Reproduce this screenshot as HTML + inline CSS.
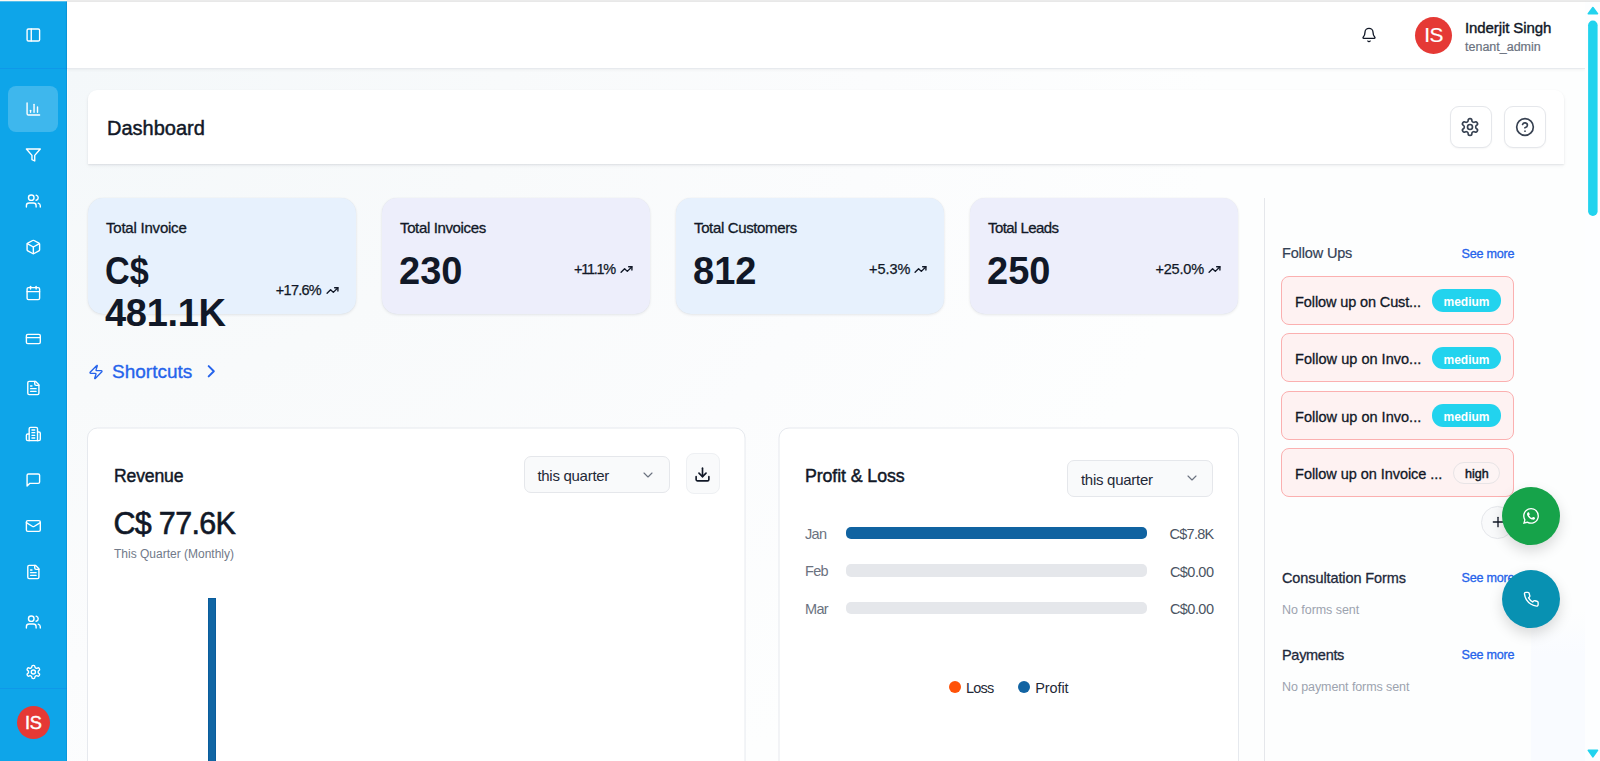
<!DOCTYPE html>
<html lang="en">
<head>
<meta charset="utf-8">
<title>Dashboard</title>
<style>
*{box-sizing:border-box;margin:0;padding:0}
html,body{width:1600px;height:761px;overflow:hidden}
body{position:relative;font-family:"Liberation Sans",sans-serif;color:#111827;background:#fafbfd}
.abs{position:absolute}
svg.ic{position:absolute;fill:none;stroke:currentColor;stroke-width:2;stroke-linecap:round;stroke-linejoin:round}
.t{position:absolute;white-space:nowrap;line-height:1}
/* page */
#topline{left:0;top:0;width:1600px;height:2px;z-index:50;background:linear-gradient(180deg,#fdf9f2 0,#fdf9f2 1px,rgba(253,249,242,.3) 1px,rgba(253,249,242,.3) 2px) 0 0/67px 2px no-repeat,linear-gradient(180deg,#ebebeb 0,#ebebeb 1px,rgba(226,226,226,.8) 1px,rgba(226,226,226,.8) 2px) 67px 0/1533px 2px no-repeat}
#main{left:67px;top:0;width:1518px;height:761px;border-left:1px solid #fdfeff;background:radial-gradient(1150px 850px at 0 69px,#f4f8fa 0%,#f8fafb 38%,#fbfcfd 70%,#fdfefe 100%)}
#side{left:0;top:0;width:67px;height:761px;background:#0ea5e9;color:#fff;border-right:1px solid rgba(2,132,199,.4)}
#side .sep1{left:0;top:67.5px;width:67px;height:1.2px;background:rgba(20,110,230,.22)}
#side .sep2{left:0;top:688.3px;width:67px;height:1.2px;background:rgba(20,110,230,.22)}
#side .act{left:8.4px;top:86px;width:49.2px;height:46px;border-radius:8px;background:rgba(255,255,255,.2)}
#side svg.ic{left:25px;width:16.7px;height:16px}
#top{left:67px;top:1px;width:1518px;height:68px;background:#fff;border-bottom:1px solid #e7eaee;box-shadow:0 1px 3px rgba(0,0,0,.05)}
.av{position:absolute;border-radius:50%;background:#e53935;color:#fff;text-align:center}
/* scrollbar */
#sb{left:1585px;top:0;width:15px;height:761px;background:#fdfeff}
#sb .th{left:3.1px;top:20.5px;width:9.5px;height:195.5px;border-radius:4.75px;background:#22d3ee}
#sb svg{position:absolute;left:0;width:15px;fill:#22d3ee;stroke:#22d3ee;stroke-width:1.6;stroke-linejoin:round}
/* header card */
#hc{left:88px;top:90px;width:1476px;height:74px;background:#fff;border-radius:9px 9px 0 0;box-shadow:0 1px 2px rgba(15,23,42,.09),0 2px 5px rgba(15,23,42,.04)}
.ibtn{position:absolute;width:42px;height:42px;border:1px solid #e5e7eb;border-radius:9px;background:#fff;color:#374151;box-shadow:0 1px 2px rgba(0,0,0,.04)}
/* stat cards */
.sc{position:absolute;top:198px;width:268.4px;height:116px;border-radius:15px;box-shadow:0 1px 3px rgba(15,23,42,.09),0 0 1px rgba(15,23,42,.08)}
.sc.b{background:#e7f1fd}
.sc.v{background:#edeefb}
.sc .lb{left:18px;top:22px;font-size:15px;color:#111827;-webkit-text-stroke:.3px #111827}
.sc .num{left:17px;top:51.5px;font-size:38px;font-weight:700;color:#111827;line-height:42.5px;white-space:normal;width:160px}
.sc .pc{right:31.7px;top:63.5px;font-size:14.5px;color:#111827;-webkit-text-stroke:.25px #111827}
.sc svg.ic{right:17.2px;top:65.2px;width:13px;height:13px;stroke-width:2.5;color:#111827}
/* panels */
.pn{position:absolute;top:427.5px;height:360px;background:#fff;border:1px solid #e8ebef;border-radius:12px;box-shadow:0 1px 2px rgba(15,23,42,.04)}
.sel{position:absolute;width:146px;height:37.2px;border:1px solid #e5e7eb;border-radius:7px;background:#f9fafb}
.sel .t{left:12.7px;top:11.2px;font-size:15px;letter-spacing:-.28px;color:#1f2937}
.sel svg.ic{left:115.4px;top:9.4px;width:16px;height:16px;color:#6b7280;stroke-width:1.7}
.row .m{font-size:14.5px;letter-spacing:-.7px;color:#6b7280}
.row .v{font-size:14.5px;letter-spacing:-.55px;color:#4b5563}
.bar{position:absolute;left:846px;width:300.5px;height:12.7px;border-radius:5px;background:#e5e7eb}
/* right */
.fu{position:absolute;left:1281.3px;width:232.7px;height:48.8px;border:1px solid #fbb0b0;border-radius:8px;background:#fef2f2}
.fu .t{left:12.8px;top:17.6px;font-size:14.5px;color:#111827;-webkit-text-stroke:.3px #111827}
.bd{position:absolute;left:149.7px;top:12.2px;width:69px;height:22.4px;border-radius:11.2px;background:#22d3ee;color:#fff;font-size:12px;font-weight:700;text-align:center;line-height:27.4px}
.bd.hi{left:170.8px;top:12.5px;width:47.4px;height:22.2px;background:#fdf4f4;border:1px solid #e8e4e6;color:#111827;font-weight:400;font-size:12.5px;-webkit-text-stroke:.45px #111827;line-height:22.6px}
.sm{font-size:12.6px;letter-spacing:-.25px;color:#2563eb;-webkit-text-stroke:.3px #2563eb}
.h3{font-size:14.5px;color:#1e293b;-webkit-text-stroke:.3px #1e293b}
.mu{font-size:12.5px;color:#9ca3af}
.fab{position:absolute;left:1502px;width:58px;height:58px;border-radius:50%;color:#fff;box-shadow:0 6px 14px rgba(0,0,0,.15)}
</style>
</head>
<body>
<div class="abs" id="main"></div>

<!-- SIDEBAR -->
<div class="abs" id="side">
  <div class="abs sep1"></div>
  <div class="abs act"></div>
  <svg class="ic" style="top:27px" viewBox="0 0 24 24" preserveAspectRatio="none"><rect width="18" height="18" x="3" y="3" rx="2"/><path d="M9 3v18"/></svg>
  <svg class="ic" style="top:101px" viewBox="0 0 24 24" preserveAspectRatio="none"><path d="M3 3v16a2 2 0 0 0 2 2h16"/><path d="M18 17V9"/><path d="M13 17V5"/><path d="M8 17v-3"/></svg>
  <svg class="ic" style="top:147px" viewBox="0 0 24 24" preserveAspectRatio="none"><polygon points="22 3 2 3 10 12.46 10 19 14 21 14 12.46 22 3"/></svg>
  <svg class="ic" style="top:193px" viewBox="0 0 24 24" preserveAspectRatio="none"><path d="M16 21v-2a4 4 0 0 0-4-4H6a4 4 0 0 0-4 4v2"/><circle cx="9" cy="7" r="4"/><path d="M22 21v-2a4 4 0 0 0-3-3.87"/><path d="M16 3.13a4 4 0 0 1 0 7.75"/></svg>
  <svg class="ic" style="top:239px" viewBox="0 0 24 24" preserveAspectRatio="none"><path d="M21 8a2 2 0 0 0-1-1.73l-7-4a2 2 0 0 0-2 0l-7 4A2 2 0 0 0 3 8v8a2 2 0 0 0 1 1.73l7 4a2 2 0 0 0 2 0l7-4A2 2 0 0 0 21 16Z"/><path d="m3.3 7 8.7 5 8.7-5"/><path d="M12 22V12"/></svg>
  <svg class="ic" style="top:285px" viewBox="0 0 24 24" preserveAspectRatio="none"><path d="M8 2v4"/><path d="M16 2v4"/><rect width="18" height="18" x="3" y="4" rx="2"/><path d="M3 10h18"/></svg>
  <svg class="ic" style="top:331px" viewBox="0 0 24 24" preserveAspectRatio="none"><rect width="20" height="14" x="2" y="5" rx="2"/><path d="M2 10h20"/></svg>
  <svg class="ic" style="top:380px" viewBox="0 0 24 24" preserveAspectRatio="none"><path d="M15 2H6a2 2 0 0 0-2 2v16a2 2 0 0 0 2 2h12a2 2 0 0 0 2-2V7Z"/><path d="M14 2v4a2 2 0 0 0 2 2h4"/><path d="M10 9H8"/><path d="M16 13H8"/><path d="M16 17H8"/></svg>
  <svg class="ic" style="top:426px" viewBox="0 0 24 24" preserveAspectRatio="none"><path d="M6 22V4a2 2 0 0 1 2-2h8a2 2 0 0 1 2 2v18Z"/><path d="M6 12H4a2 2 0 0 0-2 2v6a2 2 0 0 0 2 2h2"/><path d="M18 9h2a2 2 0 0 1 2 2v9a2 2 0 0 1-2 2h-2"/><path d="M10 6h4"/><path d="M10 10h4"/><path d="M10 14h4"/><path d="M10 18h4"/></svg>
  <svg class="ic" style="top:472px" viewBox="0 0 24 24" preserveAspectRatio="none"><path d="M21 15a2 2 0 0 1-2 2H7l-4 4V5a2 2 0 0 1 2-2h14a2 2 0 0 1 2 2z"/></svg>
  <svg class="ic" style="top:518px" viewBox="0 0 24 24" preserveAspectRatio="none"><rect width="20" height="16" x="2" y="4" rx="2"/><path d="m22 7-8.97 5.7a1.94 1.94 0 0 1-2.06 0L2 7"/></svg>
  <svg class="ic" style="top:564px" viewBox="0 0 24 24" preserveAspectRatio="none"><path d="M15 2H6a2 2 0 0 0-2 2v16a2 2 0 0 0 2 2h12a2 2 0 0 0 2-2V7Z"/><path d="M14 2v4a2 2 0 0 0 2 2h4"/><path d="M10 9H8"/><path d="M16 13H8"/><path d="M16 17H8"/></svg>
  <svg class="ic" style="top:614px" viewBox="0 0 24 24" preserveAspectRatio="none"><path d="M16 21v-2a4 4 0 0 0-4-4H6a4 4 0 0 0-4 4v2"/><circle cx="9" cy="7" r="4"/><path d="M22 21v-2a4 4 0 0 0-3-3.87"/><path d="M16 3.13a4 4 0 0 1 0 7.75"/></svg>
  <svg class="ic" style="top:664px" viewBox="0 0 24 24" preserveAspectRatio="none"><path d="M12.22 2h-.44a2 2 0 0 0-2 2v.18a2 2 0 0 1-1 1.73l-.43.25a2 2 0 0 1-2 0l-.15-.08a2 2 0 0 0-2.73.73l-.22.38a2 2 0 0 0 .73 2.73l.15.1a2 2 0 0 1 1 1.72v.51a2 2 0 0 1-1 1.74l-.15.09a2 2 0 0 0-.73 2.73l.22.38a2 2 0 0 0 2.73.73l.15-.08a2 2 0 0 1 2 0l.43.25a2 2 0 0 1 1 1.73V20a2 2 0 0 0 2 2h.44a2 2 0 0 0 2-2v-.18a2 2 0 0 1 1-1.73l.43-.25a2 2 0 0 1 2 0l.15.08a2 2 0 0 0 2.73-.73l.22-.39a2 2 0 0 0-.73-2.73l-.15-.08a2 2 0 0 1-1-1.74v-.5a2 2 0 0 1 1-1.74l.15-.09a2 2 0 0 0 .73-2.73l-.22-.38a2 2 0 0 0-2.73-.73l-.15.08a2 2 0 0 1-2 0l-.43-.25a2 2 0 0 1-1-1.73V4a2 2 0 0 0-2-2z"/><circle cx="12" cy="12" r="3"/></svg>
  <div class="abs sep2"></div>
  <div class="av" style="left:16.8px;top:706px;width:33.2px;height:33.2px;font-size:18.2px;line-height:34.8px;letter-spacing:-.4px;text-indent:-.2px;-webkit-text-stroke:.45px #fff">IS</div>
</div>

<!-- TOPBAR -->
<div class="abs" id="top">
  <svg class="ic" style="left:1294px;top:26px;width:16px;height:16px;color:#111827" viewBox="0 0 24 24"><path d="M10.268 21a2 2 0 0 0 3.464 0"/><path d="M3.262 15.326A1 1 0 0 0 4 17h16a1 1 0 0 0 .74-1.673C19.41 13.956 18 12.499 18 8A6 6 0 0 0 6 8c0 4.499-1.411 5.956-2.738 7.326"/></svg>
  <div class="av" style="left:1347.9px;top:15.6px;width:37.5px;height:37.5px;font-size:20.8px;line-height:36.3px;letter-spacing:-.5px;-webkit-text-stroke:.2px #fff">IS</div>
  <div class="t" style="left:1398px;top:19px;font-size:15px;color:#111827;letter-spacing:-.1px;-webkit-text-stroke:.4px #111827">Inderjit Singh</div>
  <div class="t" style="left:1398px;top:39.8px;font-size:12.5px;color:#6b7280;-webkit-text-stroke:.2px #6b7280">tenant_admin</div>
</div>

<div class="abs" id="topline"></div>

<!-- SCROLLBAR -->
<div class="abs" id="sb"><svg style="top:0;height:20px" viewBox="0 0 15 20"><path d="M3.3 13.7 L7.9 7.6 L12.5 13.7 Z"/></svg><svg style="top:0;height:230px;stroke:none" viewBox="0 0 15 230"><rect x="3.1" y="20.5" width="9.5" height="195.5" rx="4.75"/></svg><svg style="top:741px;height:20px" viewBox="0 0 15 20"><path d="M3.3 9.3 L12.5 9.3 L7.9 15.8 Z"/></svg></div>
<div class="abs" style="left:1531px;top:610px;width:54px;height:151px;background:linear-gradient(180deg,rgba(249,251,255,0) 0,#f9fbff 30%,#f9fbff 100%)"></div>

<!-- HEADER CARD -->
<div class="abs" id="hc">
  <div class="t" style="left:19px;top:28px;font-size:20px;color:#111827;-webkit-text-stroke:.45px #111827">Dashboard</div>
  <div class="ibtn" style="left:1362px;top:16px"><svg class="ic" style="left:9px;top:10px;width:20px;height:20px" viewBox="0 0 24 24"><path d="M12.22 2h-.44a2 2 0 0 0-2 2v.18a2 2 0 0 1-1 1.73l-.43.25a2 2 0 0 1-2 0l-.15-.08a2 2 0 0 0-2.73.73l-.22.38a2 2 0 0 0 .73 2.73l.15.1a2 2 0 0 1 1 1.72v.51a2 2 0 0 1-1 1.74l-.15.09a2 2 0 0 0-.73 2.73l.22.38a2 2 0 0 0 2.73.73l.15-.08a2 2 0 0 1 2 0l.43.25a2 2 0 0 1 1 1.73V20a2 2 0 0 0 2 2h.44a2 2 0 0 0 2-2v-.18a2 2 0 0 1 1-1.73l.43-.25a2 2 0 0 1 2 0l.15.08a2 2 0 0 0 2.73-.73l.22-.39a2 2 0 0 0-.73-2.73l-.15-.08a2 2 0 0 1-1-1.74v-.5a2 2 0 0 1 1-1.74l.15-.09a2 2 0 0 0 .73-2.73l-.22-.38a2 2 0 0 0-2.73-.73l-.15.08a2 2 0 0 1-2 0l-.43-.25a2 2 0 0 1-1-1.73V4a2 2 0 0 0-2-2z"/><circle cx="12" cy="12" r="3"/></svg></div>
  <div class="ibtn" style="left:1416px;top:16px"><svg class="ic" style="left:10px;top:10px;width:20px;height:20px" viewBox="0 0 24 24"><circle cx="12" cy="12" r="10"/><path d="M9.09 9a3 3 0 0 1 5.83 1c0 2-3 3-3 3"/><path d="M12 17h.01"/></svg></div>
</div>

<!-- STAT CARDS -->
<div class="sc b" style="left:88px">
  <div class="t lb" style="letter-spacing:-.22px">Total Invoice</div>
  <div class="t num"><span style="display:inline-block;transform:scaleX(.9);transform-origin:0 50%">C$</span> <span style="letter-spacing:-.3px">481.1K</span></div>
  <div class="t pc" style="top:84.5px;letter-spacing:-.74px;right:35.4px">+17.6%</div>
  <svg class="ic" style="top:86.2px" viewBox="0 0 24 24"><polyline points="22 7 13.5 15.5 8.5 10.5 2 17"/><polyline points="16 7 22 7 22 13"/></svg>
</div>
<div class="sc v" style="left:382px">
  <div class="t lb" style="letter-spacing:-.36px">Total Invoices</div>
  <div class="t num">230</div>
  <div class="t pc" style="letter-spacing:-1.24px;right:35.4px">+11.1%</div>
  <svg class="ic" viewBox="0 0 24 24"><polyline points="22 7 13.5 15.5 8.5 10.5 2 17"/><polyline points="16 7 22 7 22 13"/></svg>
</div>
<div class="sc b" style="left:676px">
  <div class="t lb" style="letter-spacing:-.36px">Total Customers</div>
  <div class="t num">812</div>
  <div class="t pc" style="right:33.9px">+5.3%</div>
  <svg class="ic" viewBox="0 0 24 24"><polyline points="22 7 13.5 15.5 8.5 10.5 2 17"/><polyline points="16 7 22 7 22 13"/></svg>
</div>
<div class="sc v" style="left:970px">
  <div class="t lb" style="letter-spacing:-.56px">Total Leads</div>
  <div class="t num">250</div>
  <div class="t pc" style="letter-spacing:-.16px;right:34.4px">+25.0%</div>
  <svg class="ic" viewBox="0 0 24 24"><polyline points="22 7 13.5 15.5 8.5 10.5 2 17"/><polyline points="16 7 22 7 22 13"/></svg>
</div>

<!-- SHORTCUTS -->
<svg class="ic" style="left:88px;top:363.5px;width:16px;height:16px;color:#2563eb" viewBox="0 0 24 24"><path d="M4 14a1 1 0 0 1-.78-1.63l9.9-10.2a.5.5 0 0 1 .86.46l-1.92 6.02A1 1 0 0 0 13 10h7a1 1 0 0 1 .78 1.63l-9.9 10.2a.5.5 0 0 1-.86-.46l1.92-6.02A1 1 0 0 0 11 14z"/></svg>
<div class="t" style="left:112px;top:362.1px;font-size:19px;color:#2563eb;-webkit-text-stroke:.35px #2563eb">Shortcuts</div>
<svg class="ic" style="left:201.3px;top:361.2px;width:20.5px;height:20.5px;stroke-width:2.3;color:#2563eb" viewBox="0 0 24 24"><path d="m9 18 6-6-6-6"/></svg>

<!-- REVENUE -->
<svg class="abs" style="left:0;top:0;width:1600px;height:761px" viewBox="0 0 1600 761"><rect x="87.5" y="428" width="657.54" height="400" rx="10" fill="#fff" stroke="#e6e9ee" stroke-width="1"/><rect x="779" y="428" width="459.54" height="400" rx="10" fill="#fff" stroke="#e6e9ee" stroke-width="1"/></svg>
<div class="abs" style="left:89px;top:429px;width:0;height:0">
  <div class="t" style="left:25px;top:38.5px;font-size:17.6px;letter-spacing:-.15px;color:#111827;-webkit-text-stroke:.45px #111827">Revenue</div>
  <div class="t" style="left:24.5px;top:78.8px;font-size:30.5px;letter-spacing:-.7px;color:#111827;-webkit-text-stroke:.6px #111827">C$ 77.6K</div>
  <div class="t" style="left:25px;top:119.4px;font-size:12px;color:#717a89">This Quarter (Monthly)</div>
  <div class="abs" style="left:119px;top:169px;width:7.7px;height:200px;background:#1166a4;box-shadow:inset 0 0 0 1px #0a5c9c"></div>
  <div class="sel" style="left:434.7px;top:27.3px"><div class="t">this quarter</div><svg class="ic" viewBox="0 0 24 24"><path d="m6 9 6 6 6-6"/></svg></div>
  <div class="abs" style="left:597.2px;top:24.2px;width:33.4px;height:41.3px;border:1px solid #eef0f3;border-radius:8px;background:#f9fafb;color:#111827"><svg class="ic" style="left:7px;top:12px;width:17px;height:17px;stroke-width:2.3" viewBox="0 0 24 24"><path d="M21 15v4a2 2 0 0 1-2 2H5a2 2 0 0 1-2-2v-4"/><polyline points="7 10 12 15 17 10"/><line x1="12" x2="12" y1="15" y2="3"/></svg></div>
</div>

<!-- PROFIT & LOSS -->
<div class="t" style="left:805px;top:467.5px;font-size:17.8px;letter-spacing:-.1px;color:#111827;-webkit-text-stroke:.45px #111827">Profit &amp; Loss</div>
<div class="sel" style="left:1067.3px;top:460.1px"><div class="t">this quarter</div><svg class="ic" viewBox="0 0 24 24"><path d="m6 9 6 6 6-6"/></svg></div>
<div class="row">
  <div class="t m" style="left:805px;top:526.9px">Jan</div><div class="bar" style="top:526.5px;background:#1063a1"></div><div class="t v" style="right:386.6px;top:527.1px;letter-spacing:-.75px">C$7.8K</div>
  <div class="t m" style="left:805px;top:564.3px">Feb</div><div class="bar" style="top:564.05px"></div><div class="t v" style="right:386.6px;top:564.5px">C$0.00</div>
  <div class="t m" style="left:805px;top:601.8px">Mar</div><div class="bar" style="top:601.6px"></div><div class="t v" style="right:386.6px;top:601.8px">C$0.00</div>
</div>
<div class="abs" style="left:948.8px;top:681px;width:12.4px;height:12.4px;border-radius:50%;background:#ff5208"></div>
<div class="t" style="left:966px;top:681.2px;font-size:14.5px;letter-spacing:-.8px;color:#1f2937">Loss</div>
<div class="abs" style="left:1018px;top:681px;width:12.4px;height:12.4px;border-radius:50%;background:#1264a3"></div>
<div class="t" style="left:1035.3px;top:681.2px;font-size:14.5px;letter-spacing:-.1px;color:#1f2937">Profit</div>

<!-- RIGHT PANEL -->
<div class="abs" style="left:1264px;top:198px;width:1px;height:563px;background:#e5e7eb"></div>
<div class="t h3" style="left:1282px;top:246.1px;letter-spacing:-.15px;color:#334155;-webkit-text-stroke:.2px #334155">Follow Ups</div>
<div class="t sm" style="right:85.8px;top:247.5px">See more</div>
<div class="fu" style="top:276px"><div class="t" style="letter-spacing:-.12px">Follow up on Cust...</div><div class="bd">medium</div></div>
<div class="fu" style="top:333.4px"><div class="t" style="letter-spacing:.02px">Follow up on Invo...</div><div class="bd">medium</div></div>
<div class="fu" style="top:391px"><div class="t" style="letter-spacing:.02px">Follow up on Invo...</div><div class="bd">medium</div></div>
<div class="fu" style="top:448.4px"><div class="t" style="letter-spacing:-.05px">Follow up on Invoice ...</div><div class="bd hi">high</div></div>
<div class="abs" style="left:1481.3px;top:506px;width:32.8px;height:32.8px;border-radius:50%;border:1px solid #e5e7eb;background:#f9fafb;color:#111827"><svg class="ic" style="left:7.4px;top:7.4px;width:16px;height:16px" viewBox="0 0 24 24"><path d="M5 12h14"/><path d="M12 5v14"/></svg></div>
<div class="t h3" style="left:1282px;top:570.7px;letter-spacing:-.1px">Consultation Forms</div>
<div class="t sm" style="right:85.8px;top:572px">See more</div>
<div class="t mu" style="left:1282px;top:603.9px;letter-spacing:-.05px">No forms sent</div>
<div class="t h3" style="left:1282px;top:647.5px;letter-spacing:-.3px">Payments</div>
<div class="t sm" style="right:85.8px;top:649.2px">See more</div>
<div class="t mu" style="left:1282px;top:681.1px;letter-spacing:-.09px">No payment forms sent</div>

<!-- FABS -->
<div class="fab" style="top:486.6px;background:#16a34a"><svg style="position:absolute;left:21px;top:21.4px;width:16px;height:16px;fill:#fff" viewBox="0 0 24 24"><path d="M17.472 14.382c-.297-.149-1.758-.867-2.03-.967-.273-.099-.471-.148-.67.15-.197.297-.767.966-.94 1.164-.173.199-.347.223-.644.075-.297-.15-1.255-.463-2.39-1.475-.883-.788-1.48-1.761-1.653-2.059-.173-.297-.018-.458.13-.606.134-.133.298-.347.446-.52.149-.174.198-.298.298-.497.099-.198.05-.371-.025-.52-.075-.149-.669-1.612-.916-2.207-.242-.579-.487-.5-.669-.51-.173-.008-.371-.01-.57-.01-.198 0-.52.074-.792.372-.272.297-1.04 1.016-1.04 2.479 0 1.462 1.065 2.875 1.213 3.074.149.198 2.096 3.2 5.077 4.487.709.306 1.262.489 1.694.625.712.227 1.36.195 1.871.118.571-.085 1.758-.719 2.006-1.413.248-.694.248-1.289.173-1.413-.074-.124-.272-.198-.57-.347m-5.421 7.403h-.004a9.87 9.87 0 01-5.031-1.378l-.361-.214-3.741.982.998-3.648-.235-.374a9.86 9.86 0 01-1.51-5.26c.001-5.45 4.436-9.884 9.888-9.884 2.64 0 5.122 1.03 6.988 2.898a9.825 9.825 0 012.893 6.994c-.003 5.45-4.437 9.884-9.885 9.884m8.413-18.297A11.815 11.815 0 0012.05 0C5.495 0 .16 5.335.157 11.892c0 2.096.547 4.142 1.588 5.945L.057 24l6.305-1.654a11.882 11.882 0 005.683 1.448h.005c6.554 0 11.89-5.335 11.893-11.893a11.821 11.821 0 00-3.48-8.413z"/></svg></div>
<div class="fab" style="top:570.3px;background:#0891b2"><svg class="ic" style="left:21px;top:20.8px;width:16.5px;height:16.5px" viewBox="0 0 24 24"><path d="M22 16.92v3a2 2 0 0 1-2.18 2 19.79 19.79 0 0 1-8.63-3.07 19.5 19.5 0 0 1-6-6 19.79 19.79 0 0 1-3.07-8.67A2 2 0 0 1 4.11 2h3a2 2 0 0 1 2 1.72 12.84 12.84 0 0 0 .7 2.81 2 2 0 0 1-.45 2.11L8.09 9.91a16 16 0 0 0 6 6l1.27-1.27a2 2 0 0 1 2.11-.45 12.84 12.84 0 0 0 2.81.7A2 2 0 0 1 22 16.92z"/></svg></div>
</body>
</html>
